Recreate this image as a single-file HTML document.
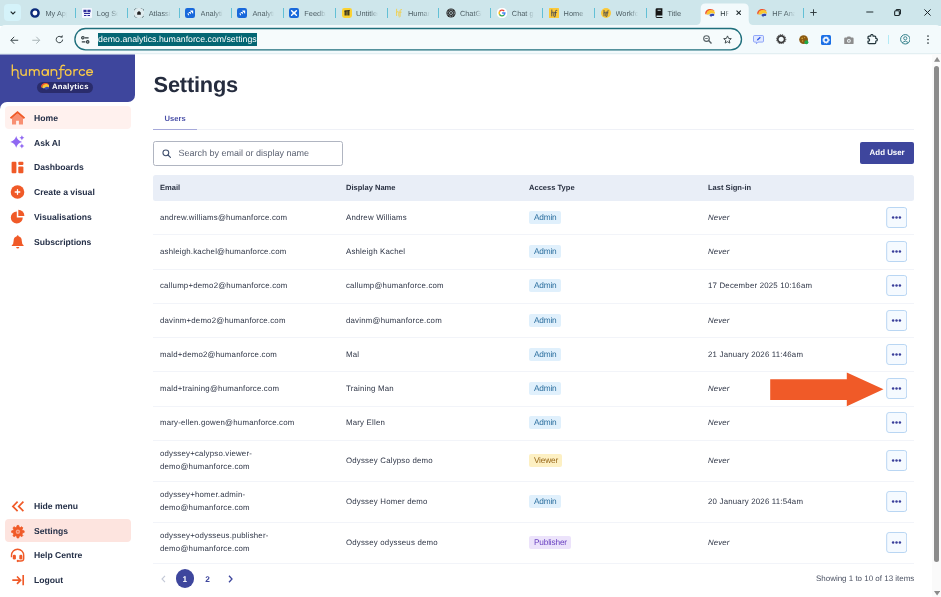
<!DOCTYPE html>
<html>
<head>
<meta charset="utf-8">
<title>Settings</title>
<style>
*{box-sizing:border-box;margin:0;padding:0}
html,body{width:941px;height:597px;overflow:hidden;background:#fff;font-family:"Liberation Sans",sans-serif;color:#2a3142}
div,span,svg,i{position:absolute}
#root{left:0;top:0;width:941px;height:597px;will-change:transform;overflow:hidden;text-rendering:geometricPrecision}
#tabstrip{left:0;top:0;width:941px;height:26px;background:#cee6eb}
#toolbar{left:0;top:25px;width:941px;height:28px;background:#f3fafc;border-radius:5px 5px 0 0}
#tbline{left:0;top:53px;width:941px;height:1px;background:#e3eff2}
.tt{top:8.8px;font-size:7.4px;line-height:9px;color:#4d5e64;white-space:nowrap;overflow:hidden;-webkit-mask-image:linear-gradient(90deg,#000 62%,transparent 100%);mask-image:linear-gradient(90deg,#000 62%,transparent 100%)}
.tsep{top:8px;width:1px;height:10px;background:#62c0d6}
.fav{top:7.5px;width:10px;height:10px}
#acttab{left:701px;top:4px;width:47px;height:22px;background:#f3fafc;border-radius:5px 5px 0 0}
#acttabL{left:696px;top:21px;width:5px;height:5px;background:radial-gradient(circle at 0 0,transparent 5px,#f3fafc 5.5px)}
#acttabR{left:748px;top:21px;width:5px;height:5px;background:radial-gradient(circle at 100% 0,transparent 5px,#f3fafc 5.5px)}
#tsearch{left:4px;top:4px;width:17px;height:17px;border-radius:4px;background:#d5f3fa}
#omni{left:74.4px;top:28px;width:668.4px;height:22.2px;border:1.7px solid #1b6b78;border-radius:11.1px;background:#f7fbfc}
#url{left:97.6px;top:33px;height:13px;background:#046673;color:#fff;font-size:8.76px;line-height:13.4px;white-space:nowrap;padding:0 0.5px}
#sidebar{left:0;top:54px;width:135px;height:543px;background:#fff}
#brand{left:0;top:0;width:135px;height:55px;background:#3e469d}
#brandcorner{left:135px;top:0;width:0;height:0}
#navpanel{left:0;top:48px;width:135px;height:495px;background:#fff;border-top-left-radius:7px}
#brandmask{left:128px;top:41px;width:7px;height:14px;background:#fff}
#brandround{left:121px;top:34px;width:14px;height:14px;background:#3e469d;border-bottom-right-radius:7px}
#pill{left:36.5px;top:27.8px;width:56.5px;height:10.8px;border-radius:6px;background:#2a2c6c}
#pill span{left:15.4px;top:0.3px;font-size:7.7px;letter-spacing:0.3px;line-height:10.4px;font-weight:bold;color:#fff}
.nav{left:5px;width:125.5px;height:22.5px;border-radius:4px}
.nav span{left:29px;top:6px;font-size:8.62px;line-height:11px;font-weight:bold;color:#253048;white-space:nowrap}
.nav svg{left:5.1px;top:4.25px;width:15px;height:15px;overflow:visible}
.nav.a1{background:#fff1ee}
.nav.a2{background:#fde4df}
#main{left:135px;top:54px;width:797px;height:543px;background:#fff}
h1{position:absolute;left:18.6px;top:17.6px;font-size:21.8px;line-height:26px;font-weight:bold;color:#252c3e;letter-spacing:-0.2px}
#tabUsers{left:29.5px;top:59.5px;font-size:7.6px;line-height:10px;font-weight:bold;color:#4a50a8}
#tabline{left:18px;top:75px;width:761px;height:1px;background:#eff1f7}
#tabul{left:18px;top:75px;width:44px;height:1px;background:#a6a9da}
#search{left:18px;top:87px;width:190px;height:25px;border:1px solid #b0b5c1;border-radius:2.5px}
#search span{left:24.5px;top:5.4px;font-size:9px;line-height:12px;color:#5c6373;white-space:nowrap}
#adduser{left:725px;top:87.6px;width:54.3px;height:22px;background:#3e469d;border-radius:2px;color:#fff;font-size:7.9px;font-weight:bold;text-align:center;line-height:22px}
#thead{left:18px;top:121.3px;width:761.3px;height:25.7px;background:#e9eef7;border-radius:2.5px}
#thead span{top:7.5px;font-size:7.55px;line-height:10px;font-weight:bold;color:#2a3142;white-space:nowrap}
.row{left:18px;width:761px;border-bottom:1px solid #f2f4f9}
.row span{font-size:7.85px;letter-spacing:0.2px;line-height:10px;color:#2e3546;white-space:nowrap}
.c1{left:7px}.c2{left:193px}.c3{left:376px}.c4{left:555px}
.row span.it{font-style:italic;font-size:7.8px;letter-spacing:0.12px}
.badge{left:376px;height:13px;border-radius:2px}
.badge span{left:4.9px;top:1.1px;font-size:8.3px;letter-spacing:-0.17px;line-height:10px}
.adm{background:#e0f0fc}.adm span{color:#2c6f9f}
.vw{background:#fdf0c3}.vw span{color:#9a6a1c}
.pub{background:#ece3fb}.pub span{color:#6a42c0}
.more{left:733px;width:21px;height:21px}
#pag span{font-size:8.3px;font-weight:bold;color:#3e469d;line-height:10px}
#showing{right:17.7px;top:520.3px;font-size:7.97px;line-height:10px;color:#4a5162;white-space:nowrap}
#scroll{left:932px;top:54px;width:9px;height:543px;background:#fafafa}
#thumb{left:2px;top:12px;width:5.2px;height:496px;border-radius:3px;background:#8b8b8b}
</style>
</head>
<body>
<div id="root">
<div id="tabstrip"></div>
<div id="toolbar"></div>
<div id="tbline"></div>
<svg class="fav" style="left:30.4px" viewBox="0 0 10 10"><circle cx="5" cy="5" r="3.6" fill="#fff" stroke="#0b2a7a" stroke-width="2.4"/></svg><div class="tt" style="left:45.4px;width:22px">My Apps</div><div class="tsep" style="left:75.3px"></div><svg class="fav" style="left:81.5px" viewBox="0 0 10 10"><rect x="0" y="0" width="10" height="10" rx="1" fill="#f4f7ff"/><path d="M2 2.2h2v1.6h-2zM6 2.2h2v1.6h-2zM2 5.5h6M2 7.5h2.5M5.5 7.5h2.5" stroke="#2a2a9a" stroke-width="1.1" fill="#2a2a9a"/></svg><div class="tt" style="left:96.8px;width:21px">Log Sea</div><div class="tsep" style="left:127.2px"></div><svg class="fav" style="left:134.0px" viewBox="0 0 10 10"><circle cx="5" cy="5" r="5.6" fill="#dfecef" stroke="#4f686e" stroke-width="0.9" stroke-dasharray="2.400 0.900"/><path d="M3.2 6.8V4.6L5 3l1.8 1.6v2.2z" fill="#222"/></svg><div class="tt" style="left:148.7px;width:22px">Atlassia</div><div class="tsep" style="left:179.0px"></div><svg class="fav" style="left:185.2px" viewBox="0 0 10 10"><rect x="0" y="0" width="10" height="10" rx="2.2" fill="#1868db"/><path d="M5.2 2.4h3v3c-.9 0-1.5-.6-1.5-1.5-.9 0-1.5-.6-1.5-1.5zM3.6 4h2.2v2.2c-.7 0-1.1-.5-1.1-1.1-.7 0-1.1-.5-1.1-1.1zM2.2 5.6h1.8v1.8c-.5 0-.9-.4-.9-.9-.5 0-.9-.4-.9-.9z" fill="#fff"/></svg><div class="tt" style="left:200.5px;width:22px">Analyti</div><div class="tsep" style="left:230.9px"></div><svg class="fav" style="left:237.1px" viewBox="0 0 10 10"><rect x="0" y="0" width="10" height="10" rx="2.2" fill="#1868db"/><path d="M5.2 2.4h3v3c-.9 0-1.5-.6-1.5-1.5-.9 0-1.5-.6-1.5-1.5zM3.6 4h2.2v2.2c-.7 0-1.1-.5-1.1-1.1-.7 0-1.1-.5-1.1-1.1zM2.2 5.6h1.8v1.8c-.5 0-.9-.4-.9-.9-.5 0-.9-.4-.9-.9z" fill="#fff"/></svg><div class="tt" style="left:252.4px;width:22px">Analyti</div><div class="tsep" style="left:282.8px"></div><svg class="fav" style="left:289.0px" viewBox="0 0 10 10"><rect x="0" y="0" width="10" height="10" rx="2.2" fill="#1868db"/><path d="M2.6 2.8l4.8 4.4M7.4 2.8l-4.8 4.4" stroke="#fff" stroke-width="1.5" stroke-linecap="round"/><rect x="3.8" y="3.9" width="2.4" height="2.2" fill="#fff"/></svg><div class="tt" style="left:304.3px;width:22px">Feedba</div><div class="tsep" style="left:334.6px"></div><svg class="fav" style="left:341.6px" viewBox="0 0 10 10"><rect x="0" y="0" width="10" height="10" rx="2.4" fill="#fbd232"/><path d="M2.6 2.6h1.2v4.8h-1.2zM4.4 2.6h1.2v4.8h-1.2zM6.2 2.6h1.2v4.8h-1.2z" fill="#1c1c1c"/><path d="M2.4 3.2l5.4-.8" stroke="#1c1c1c" stroke-width="0.8"/></svg><div class="tt" style="left:356.1px;width:22px">Untitled</div><div class="tsep" style="left:386.5px"></div><svg class="fav" style="left:393.5px" viewBox="0 0 10 10"><path d="M2.6 1.2v6.4M2.6 4.6c.3-1.4 2.2-1.4 2.2 0v3M7.6 1.6c-1.3-.3-1.5.5-1.5 1.4v5c0 1-.6 1.2-1.1 1M5.2 4.2h2" stroke="#f2cf4a" stroke-width="0.9" fill="none" stroke-linecap="round"/></svg><div class="tt" style="left:408.0px;width:22px">Human</div><div class="tsep" style="left:438.4px"></div><svg class="fav" style="left:446.0px" viewBox="0 0 10 10"><circle cx="5" cy="5" r="4.6" fill="#2b2b2b"/><circle cx="5" cy="5" r="3.3" fill="none" stroke="#cde4ea" stroke-width="0.7" stroke-dasharray="1.6 1"/><circle cx="5" cy="5" r="1.5" fill="none" stroke="#cde4ea" stroke-width="0.7"/></svg><div class="tt" style="left:459.9px;width:22px">ChatGP</div><div class="tsep" style="left:490.3px"></div><svg class="fav" style="left:497.3px" viewBox="0 0 10 10"><circle cx="5" cy="5" r="5.3" fill="#fff"/><g fill="none" stroke-width="1.35"><path d="M7.22 3.14A2.9 2.9 0 0 0 2.49 3.55" stroke="#ea4335"/><path d="M2.49 3.55A2.9 2.9 0 0 0 2.49 6.45" stroke="#fbbc05"/><path d="M2.49 6.45A2.9 2.9 0 0 0 7.05 7.05" stroke="#34a853"/><path d="M7.05 7.05A2.9 2.9 0 0 0 7.9 5H5.1" stroke="#4285f4"/></g></svg><div class="tt" style="left:511.8px;width:22px">Chat gp</div><div class="tsep" style="left:542.1px"></div><svg class="fav" style="left:549.4px" viewBox="0 0 10 10"><rect x="0" y="0" width="10" height="10" rx="0.6" fill="#fbc93a"/><path d="M2.8 2v6M2.8 5c.3-1.3 2-1.3 2 0v3M7.8 2.4c-1.2-.3-1.4.4-1.4 1.2v4.2c0 .9-.5 1-1 .9M5.6 4.6h1.8" stroke="#3a3f55" stroke-width="0.85" fill="none" stroke-linecap="round"/></svg><div class="tt" style="left:563.6px;width:22px">Home</div><div class="tsep" style="left:594.0px"></div><svg class="fav" style="left:601.2px" viewBox="0 0 10 10"><circle cx="5" cy="5" r="5" fill="#fbc93a"/><path d="M3 2.4v5.4M3 5c.3-1.2 1.8-1.2 1.8 0v2.8M7.4 2.8c-1.1-.3-1.3.4-1.3 1.1v3.8c0 .8-.4.9-.9.8M5.4 4.8h1.6" stroke="#3a3f55" stroke-width="0.8" fill="none" stroke-linecap="round"/></svg><div class="tt" style="left:615.5px;width:22px">Workfo</div><div class="tsep" style="left:645.9px"></div><svg class="fav" style="left:654.1px" viewBox="0 0 10 10"><path d="M1.6 1.6Q1.6 .2 3 .2H8.4V7.6H3Q2.4 7.6 2.4 8.3Q2.4 9 3 9H8.4V9.9H3Q1.6 9.9 1.6 8.5Z" fill="#151515"/><rect x="3.6" y="1.8" width="3.2" height="0.9" fill="#cde4ea"/></svg><div class="tt" style="left:667.4px;width:22px">Title</div><svg style="left:694px;top:0;width:62px;height:26px" viewBox="694 0 62 26"><path d="M695.5 25.2Q700.7 25.200 700.700 20V8.300Q700.700 3.500 705.500 3.500H743.900Q748.700 3.500 748.700 8.300V20Q748.700 25.200 753.900 25.200V26H695.500Z" fill="#f3fafc"/></svg><svg class="fav" style="left:705px" viewBox="0 0 10 10"><path d="M0.2 5.6C0 2.9 2.4 .9 5.2 .9C7.2 .9 8.9 1.7 9.6 3.1C7.8 2.1 4.4 2 2.5 3.7C1.7 4.5 1.5 5.4 1.7 6.4C.9 6.4 .3 6.2 .2 5.6Z" fill="#f0542c"/><path d="M1.7 6.4C1.3 4 3.3 2.1 5.8 2.1C7.8 2.1 9.4 2.9 9.9 4.4C10.1 5.200 9.800 5.800 9.200 6C7.800 5 5.900 5.200 4.900 6C3.900 6.800 2.900 6.800 1.700 6.400Z" fill="#fbc630"/><path d="M2.6 6.9C3.6 7 4.300 6.600 4.900 6.200C5.900 5.400 7.800 5.300 9.100 6.100" fill="none" stroke="#b9d4f2" stroke-width="0.500"/><path d="M4.900 6.500C5.900 5.600 7.800 5.400 9.200 6.200C9.600 7 9 7.900 7.800 8.100C7.100 8.200 6.700 8.100 6.500 8.300L6.100 9.300L5.300 8.100C4.500 7.900 4.300 7.100 4.900 6.500Z" fill="#3447b0"/></svg><div class="tt" style="left:720.3px;width:9px;color:#2c383c">HF A</div><svg style="left:735.8px;top:9.9px;width:5.4px;height:5.4px" viewBox="0 0 6 6"><path d="M.6.6l4.800 4.800M5.400.6L.6 5.400" stroke="#1f2a2e" stroke-width="1.200"/></svg><svg class="fav" style="left:757px" viewBox="0 0 10 10"><path d="M0.2 5.6C0 2.9 2.4 .9 5.2 .9C7.2 .9 8.9 1.7 9.6 3.1C7.8 2.1 4.4 2 2.5 3.7C1.7 4.5 1.5 5.4 1.7 6.4C.9 6.4 .3 6.2 .2 5.6Z" fill="#f0542c"/><path d="M1.7 6.4C1.3 4 3.3 2.1 5.8 2.1C7.8 2.1 9.4 2.9 9.9 4.4C10.1 5.200 9.800 5.800 9.200 6C7.800 5 5.900 5.200 4.900 6C3.900 6.800 2.900 6.800 1.700 6.400Z" fill="#fbc630"/><path d="M2.6 6.9C3.6 7 4.300 6.600 4.900 6.200C5.900 5.400 7.800 5.300 9.100 6.100" fill="none" stroke="#b9d4f2" stroke-width="0.500"/><path d="M4.900 6.500C5.900 5.600 7.800 5.400 9.200 6.200C9.600 7 9 7.900 7.800 8.100C7.100 8.200 6.700 8.100 6.500 8.300L6.100 9.300L5.300 8.100C4.500 7.900 4.300 7.100 4.900 6.500Z" fill="#3447b0"/></svg><div class="tt" style="left:772.3px;width:23px">HF Ana</div><div class="tsep" style="left:802.5px"></div><svg style="left:810px;top:9.3px;width:7px;height:7px" viewBox="0 0 7 7"><path d="M3.5 .3v6.4M.3 3.5h6.4" stroke="#2c383c" stroke-width="0.95"/></svg><svg style="left:866px;top:8px;width:8px;height:8px" viewBox="0 0 8 8"><path d="M.3 4h7" stroke="#1f2a2e" stroke-width="1"/></svg><svg style="left:894.3px;top:8.6px;width:7.2px;height:7.2px" viewBox="0 0 8 8"><rect x=".7" y="2" width="5.300" height="5.300" rx="1.300" fill="none" stroke="#1f2a2e" stroke-width="1.250"/><path d="M2.300 1.800Q2.400.7 3.500.7H6.100Q7.300.7 7.300 1.900V4.500Q7.300 5.600 6.200 5.700" fill="none" stroke="#1f2a2e" stroke-width="1.250"/></svg><svg style="left:924px;top:8.8px;width:7px;height:7px" viewBox="0 0 7 7"><path d="M.4.4l6.2 6.2M6.6.4L.4 6.6" stroke="#1f2a2e" stroke-width="1"/></svg><div id="tsearch"><svg style="left:5.5px;top:6.5px;width:6px;height:4px" viewBox="0 0 6 4"><path d="M.7.7L3 3l2.3-2.3" fill="none" stroke="#1f2a2e" stroke-width="1.2"/></svg></div>
<svg style="left:10px;top:35.5px;width:8.5px;height:8.5px" viewBox="0 0 8.5 8.5"><path d="M8.2 4.25H.9M4.2.8L.8 4.25 4.2 7.7" fill="none" stroke="#3a4549" stroke-width="1"/></svg><svg style="left:32px;top:35.5px;width:8.5px;height:8.5px" viewBox="0 0 8.5 8.5"><path d="M.3 4.25h7.3M4.3.8l3.4 3.45L4.3 7.7" fill="none" stroke="#a9b4b7" stroke-width="1"/></svg><svg style="left:54.5px;top:35px;width:9px;height:9px" viewBox="0 0 9 9"><path d="M7.6 4.6A3.2 3.2 0 1 1 6.6 2.2" fill="none" stroke="#3a4549" stroke-width="1"/><path d="M5 2.6h2.6V0z" fill="#3a4549"/></svg><svg style="left:73px;top:27px;width:671px;height:25px" viewBox="0 0 671 25"><rect x="1.9" y="1.5" width="666.6" height="21.3" rx="10.65" fill="#f6fbfc" stroke="#1f6f7c" stroke-width="1.35"/></svg><svg style="left:81.3px;top:35.8px;width:9px;height:8px" viewBox="0 0 9 8"><path d="M4 1.8H7.6M.8 5.9H4.4" stroke="#2f3a3e" stroke-width="1.15"/><circle cx="1.9" cy="1.8" r="1.25" fill="#c9d3d6" stroke="#2f3a3e" stroke-width="1.1"/><circle cx="6.700" cy="5.900" r="1.250" fill="#c9d3d6" stroke="#2f3a3e" stroke-width="1.100"/></svg><div id="url">demo.analytics.humanforce.com/settings</div><svg style="left:703px;top:35.2px;width:9px;height:9px" viewBox="0 0 9 9"><circle cx="3.5" cy="3.5" r="2.800" fill="none" stroke="#566165" stroke-width="1.150"/><path d="M5.600 5.600L8.500 8.500" stroke="#566165" stroke-width="1.400"/><path d="M2.200 3.500h2.600" stroke="#566165" stroke-width="0.900"/></svg><svg style="left:723px;top:34.7px;width:9px;height:9px" viewBox="0 0 9 9"><path d="M4.5.9l1.1 2.5 2.7.25-2.05 1.8.6 2.65L4.5 6.7 2.15 8.1l.6-2.65L.7 3.65l2.7-.25z" fill="none" stroke="#333d41" stroke-width="0.9" stroke-linejoin="round"/></svg><svg style="left:753.3px;top:35px;width:11px;height:9.5px" viewBox="0 0 11 9.5"><path d="M1.6.5H9.4Q10.5.5 10.5 1.6V6Q10.5 7.1 9.4 7.1H5L3.4 8.8V7.1H1.6Q.5 7.1.5 6V1.6Q.5.5 1.6.5Z" fill="#dfe8ff" stroke="#6b86f5" stroke-width="0.7"/><path d="M3.8 5.6L4.2 4.3 6.9 1.8 7.8 2.7 5.1 5.2Z" fill="#2f55e6"/></svg><svg style="left:776.2px;top:34px;width:10.4px;height:10.4px" viewBox="0 0 10.4 10.4"><circle cx="5.2" cy="5.2" r="3.4" fill="none" stroke="#3a3a3a" stroke-width="1.7"/><circle cx="5.2" cy="5.2" r="4.6" fill="none" stroke="#3a3a3a" stroke-width="1" stroke-dasharray="1.1 0.9"/></svg><svg style="left:799px;top:34.5px;width:10px;height:10px" viewBox="0 0 10 10"><circle cx="4.6" cy="4.6" r="4.4" fill="#8a5a12"/><circle cx="3.2" cy="3.4" r="0.8" fill="#d9a53a"/><circle cx="5.6" cy="2.6" r="0.6" fill="#d9a53a"/><circle cx="3.6" cy="6" r="0.7" fill="#d9a53a"/><circle cx="7.4" cy="7.2" r="2" fill="#1fa84a"/></svg><svg style="left:821.3px;top:34.5px;width:10px;height:10px" viewBox="0 0 10 10"><rect width="10" height="10" rx="1.6" fill="#1a6fe6"/><circle cx="5" cy="5" r="2.2" fill="none" stroke="#fff" stroke-width="1.4"/><circle cx="5" cy="5" r="3.2" fill="none" stroke="#fff" stroke-width="1" stroke-dasharray="1 1.05"/></svg><svg style="left:844.2px;top:35.6px;width:9.8px;height:8.4px" viewBox="0 0 9.8 8.4"><path d="M1.2 1.6H2.8L3.6.4H6.2L7 1.6H8.6Q9.6 1.6 9.6 2.6V7.2Q9.6 8.2 8.6 8.2H1.2Q.2 8.2.2 7.2V2.6Q.2 1.6 1.2 1.6Z" fill="#8d8d8d"/><circle cx="4.9" cy="4.8" r="1.9" fill="#f3fafc"/><circle cx="4.9" cy="4.8" r="0.9" fill="#8d8d8d"/></svg><svg style="left:866.6px;top:34.2px;width:11px;height:10.4px" viewBox="0 0 11 10.4"><path d="M2 2.2H3.700C3.700 1.300 3.900 .5 4.900 .5C5.900 .5 6.100 1.300 6.100 2.200H7.800Q8.800 2.200 8.800 3.200V4.400C9.600 4.400 10.400 4.600 10.400 5.700C10.400 6.800 9.600 7 8.800 7V8.600Q8.800 9.600 7.800 9.600H2Q1 9.600 1 8.600V7.200C1.800 7.200 2.600 6.900 2.600 5.900C2.600 4.900 1.800 4.600 1 4.600V3.200Q1 2.200 2 2.200Z" fill="none" stroke="#22343a" stroke-width="1.2" stroke-linejoin="round"/></svg><div style="left:887.6px;top:34.5px;width:1.4px;height:9.8px;background:#b2eaf5"></div><svg style="left:899.8px;top:34.2px;width:10.6px;height:10.6px" viewBox="0 0 10.6 10.6"><circle cx="5.3" cy="5.3" r="4.7" fill="none" stroke="#2f7d88" stroke-width="1"/><circle cx="5.3" cy="4.3" r="1.6" fill="none" stroke="#2f7d88" stroke-width="0.9"/><path d="M2.2 8.6Q5.3 5.6 8.4 8.6" fill="none" stroke="#2f7d88" stroke-width="0.9"/></svg><svg style="left:926.6px;top:35.2px;width:2px;height:9px" viewBox="0 0 2 9"><circle cx="1" cy="1" r=".85" fill="#2b363a"/><circle cx="1" cy="4.5" r=".85" fill="#2b363a"/><circle cx="1" cy="8" r=".85" fill="#2b363a"/></svg>
<div id="sidebar"><div id="brand"></div><div id="navpanel"></div><div id="brandmask"></div><div id="brandround"></div><svg id="hf" viewBox="0 0 941 376" style="left:8px;top:6px;width:90px;height:35.96px"><g fill="none" stroke="#f8c948" stroke-width="13.6" stroke-linecap="round" stroke-linejoin="round"><path d="M45 50V160M45 126C45 108 58 100 75 100C92 100 104 108 104 126V176C104 186 108 192 116 190"/><path d="M135 100V134C135 152 147 160 162 160C178 160 190 152 190 134M190 100V160"/><path d="M225 160V100M225 126C225 108 235 100 250 100C265 100 275 108 275 126V160M275 126C275 108 285 100 300 100C315 100 325 108 325 126V160"/><circle cx="386" cy="130" r="30"/><path d="M421 100V160"/><path d="M452 160V100M452 126C452 108 464 100 480 100C497 100 509 108 509 126V160"/><path d="M592 58C570 50 553 60 553 84V170C553 190 540 198 520 191M537 101H588"/><circle cx="629" cy="130" r="30"/><path d="M690 160V100M690 128C690 108 705 98 728 101"/><path d="M799 111A30 30 0 1 0 799 149"/><path d="M824 130H883C883 112 870 100 853 100C836 100 823 113 823 130C823 147 836 160 853 160C864 160 873 155 878 148"/></g></svg><div id="pill"><svg style="left:4px;top:1.7px;width:8.600px;height:7.400px" viewBox="0.4 1 9.4 8.4"><path d="M0.2 5.6C0 2.9 2.4 .9 5.2 .9C7.2 .9 8.9 1.7 9.6 3.1C7.8 2.1 4.4 2 2.5 3.7C1.7 4.5 1.5 5.4 1.7 6.4C.9 6.4 .3 6.2 .2 5.6Z" fill="#f0542c"/><path d="M1.7 6.4C1.3 4 3.3 2.1 5.8 2.1C7.8 2.1 9.4 2.9 9.9 4.4C10.1 5.200 9.800 5.800 9.200 6C7.800 5 5.900 5.200 4.900 6C3.900 6.800 2.900 6.800 1.700 6.400Z" fill="#fbc630"/><path d="M2.6 6.9C3.6 7 4.300 6.600 4.900 6.200C5.900 5.400 7.800 5.300 9.100 6.100" fill="none" stroke="#b9d4f2" stroke-width="0.500"/><path d="M4.900 6.500C5.900 5.600 7.800 5.400 9.200 6.200C9.600 7 9 7.900 7.800 8.100C7.100 8.200 6.700 8.100 6.500 8.300L6.100 9.300L5.300 8.100C4.500 7.900 4.300 7.100 4.900 6.500Z" fill="#3447b0"/></svg><span>Analytics</span></div><div class="nav a1" style="top:52.35px"><svg viewBox="0 0 15 15" style="top:4.25px"><path d="M2 7V13.4H6.1V9.8H8.9V13.4H13V7L7.5 2.6Z" fill="#f88f72"/><path d="M0.5 7.3L7.5 1.3 14.5 7.3" fill="none" stroke="#f05a28" stroke-width="1.8" stroke-linejoin="miter"/></svg><span style="top:7px">Home</span></div><div class="nav " style="top:77.15px"><svg viewBox="0 0 15 15" style="top:4.25px"><path d="M6.2 1.0Q7.35 5.75 12.100000000000001 6.9Q7.35 8.05 6.2 12.8Q5.050000000000001 8.05 0.2999999999999998 6.9Q5.050000000000001 5.75 6.2 1.0Z" fill="#9068f2"/><path d="M11.9 0.20000000000000018Q12.35 2.25 14.4 2.7Q12.35 3.1500000000000004 11.9 5.2Q11.450000000000001 3.1500000000000004 9.4 2.7Q11.450000000000001 2.25 11.9 0.20000000000000018Z" fill="#9068f2"/><path d="M11.9 8.4Q12.35 10.450000000000001 14.4 10.9Q12.35 11.35 11.9 13.4Q11.450000000000001 11.35 9.4 10.9Q11.450000000000001 10.450000000000001 11.9 8.4Z" fill="#9068f2"/></svg><span style="top:6.6px">Ask AI</span></div><div class="nav " style="top:101.95px"><svg viewBox="0 0 15 15" style="top:4.25px"><rect x="1.6" y="1.8" width="4.8" height="11.5" rx="1" fill="#f05a28"/><rect x="8.3" y="1.8" width="5.1" height="3.2" rx="0.9" fill="#f05a28"/><rect x="8.3" y="6.500" width="5.100" height="6.800" rx="1" fill="#f05a28"/></svg><span style="top:6px">Dashboards</span></div><div class="nav " style="top:126.75px"><svg viewBox="0 0 15 15" style="top:4.25px"><circle cx="7.5" cy="7.0" r="6.8" fill="#f05a28"/><path d="M7.5 4.700v4.600M5.200 7.000h4.600" stroke="#fff" stroke-width="1.300" stroke-linecap="round"/></svg><span style="top:6px">Create a visual</span></div><div class="nav " style="top:151.55px"><svg viewBox="0 0 15 15" style="top:4.25px"><path d="M6.8 1.6A6 6 0 1 0 12.8 7.6H6.8Z" fill="#f05a28"/><path d="M8.3 -0.2A6.100 6.100 0 0 1 14.400 5.900H8.300Z" fill="#f05a28"/></svg><span style="top:6px">Visualisations</span></div><div class="nav " style="top:176.25px"><svg viewBox="0 0 15 15" style="top:4.65px"><path d="M7.700 0.300Q8.500 0.300 8.600 1.200Q11.800 2.100 11.800 5.900Q11.800 8.900 13.600 10.300V11.100H1.800V10.300Q3.600 8.900 3.600 5.900Q3.600 2.100 6.800 1.200Q6.900 0.300 7.700 0.300Z" fill="#f05a28"/><path d="M6.100 12.100H9.300Q9.000 13.600 7.700 13.600Q6.400 13.600 6.100 12.100Z" fill="#f05a28"/></svg><span style="top:6.8px">Subscriptions</span></div><div class="nav " style="top:440.35px"><svg viewBox="0 0 15 15" style="top:4.25px"><path d="M7.6 2.7L2.9 7.4 7.6 12.1M13.4 2.7L8.7 7.4 13.4 12.1" fill="none" stroke="#f05a28" stroke-width="1.7"/></svg><span style="top:6.6px">Hide menu</span></div><div class="nav a2" style="top:465.25px"><svg viewBox="0 0 15 15" style="top:4.25px"><path d="M6.78 3.03 L7.06 1.46 L8.74 1.46 L9.02 3.03 L10.41 3.61 L11.72 2.69 L12.91 3.88 L11.99 5.19 L12.57 6.58 L14.14 6.86 L14.14 8.54 L12.57 8.82 L11.99 10.21 L12.91 11.52 L11.72 12.71 L10.41 11.79 L9.02 12.37 L8.74 13.94 L7.06 13.94 L6.78 12.37 L5.39 11.79 L4.08 12.71 L2.89 11.52 L3.81 10.21 L3.23 8.82 L1.66 8.54 L1.66 6.86 L3.23 6.58 L3.81 5.19 L2.89 3.88 L4.08 2.69 L5.39 3.61Z" fill="#f05a28" stroke="#f05a28" stroke-width="0.8" stroke-linejoin="round"/><circle cx="7.9" cy="7.7" r="2.2" fill="#f9a58c"/><circle cx="7.9" cy="7.7" r="0.8" fill="#f05a28"/></svg><span style="top:6.6px">Settings</span></div><div class="nav " style="top:489.95px"><svg viewBox="0 0 15 15" style="top:4.25px"><path d="M1.500 9.200V7.300A6.100 6.100 0 0 1 13.700 7.300V10.400Q13.700 13 10.800 13H8.400" fill="none" stroke="#f05a28" stroke-width="1.400"/><rect x="2.800" y="6.800" width="3.100" height="4.800" rx="1.300" fill="#f05a28"/><rect x="9.300" y="6.800" width="3.100" height="4.800" rx="1.300" fill="#f05a28"/><circle cx="7.800" cy="13" r="1.150" fill="#f05a28"/></svg><span style="top:6px">Help Centre</span></div><div class="nav " style="top:514.55px"><svg viewBox="0 0 15 15" style="top:4.25px"><path d="M2.3 7.15H10.4M7 3.5L10.600 7.150 7 10.800M13.200 2.100V12.200" fill="none" stroke="#f05a28" stroke-width="1.650"/></svg><span style="top:6px">Logout</span></div></div>
<div id="main"><h1>Settings</h1><div id="tabUsers">Users</div><div id="tabline"></div><div id="tabul"></div><div id="search"><svg style="left:7.6px;top:6.6px;width:9.4px;height:9.4px" viewBox="0 0 10 10"><circle cx="4.1" cy="4.1" r="3.1" fill="none" stroke="#41506e" stroke-width="1.15"/><path d="M6.4 6.4L9 9" stroke="#41506e" stroke-width="1.2" stroke-linecap="round"/></svg><span>Search by email or display name</span></div><div id="adduser">Add User</div><div id="thead"><span class="c1">Email</span><span class="c2">Display Name</span><span class="c3">Access Type</span><span class="c4">Last Sign-in</span></div><div class="row" style="top:146.50px;height:34.50px"><span class="c1" style="top:12.75px">andrew.williams@humanforce.com</span><span class="c2" style="top:12.75px">Andrew Williams</span><div class="badge adm" style="top:10.50px;width:32px"><span>Admin</span></div><span class="c4 it" style="top:12.75px">Never</span><svg class="more" style="top:6.50px" viewBox="0 0 21 21"><rect x=".7" y=".5" width="20" height="20" rx="2.5" fill="#f5faff" stroke="#b9d6f3"/><circle cx="7.1" cy="10.5" r="1.25" fill="#3a3f9a"/><circle cx="10.5" cy="10.5" r="1.25" fill="#3a3f9a"/><circle cx="13.9" cy="10.5" r="1.25" fill="#3a3f9a"/></svg></div><div class="row" style="top:181.00px;height:35.00px"><span class="c1" style="top:12.00px">ashleigh.kachel@humanforce.com</span><span class="c2" style="top:12.00px">Ashleigh Kachel</span><div class="badge adm" style="top:10.00px;width:32px"><span>Admin</span></div><span class="c4 it" style="top:12.00px">Never</span><svg class="more" style="top:6.00px" viewBox="0 0 21 21"><rect x=".7" y=".5" width="20" height="20" rx="2.5" fill="#f5faff" stroke="#b9d6f3"/><circle cx="7.1" cy="10.5" r="1.25" fill="#3a3f9a"/><circle cx="10.5" cy="10.5" r="1.25" fill="#3a3f9a"/><circle cx="13.9" cy="10.5" r="1.25" fill="#3a3f9a"/></svg></div><div class="row" style="top:216.00px;height:34.00px"><span class="c1" style="top:10.50px">callump+demo2@humanforce.com</span><span class="c2" style="top:10.50px">callump@humanforce.com</span><div class="badge adm" style="top:9.00px;width:32px"><span>Admin</span></div><span class="c4" style="top:10.50px">17 December 2025 10:16am</span><svg class="more" style="top:5.00px" viewBox="0 0 21 21"><rect x=".7" y=".5" width="20" height="20" rx="2.5" fill="#f5faff" stroke="#b9d6f3"/><circle cx="7.1" cy="10.5" r="1.25" fill="#3a3f9a"/><circle cx="10.5" cy="10.5" r="1.25" fill="#3a3f9a"/><circle cx="13.9" cy="10.5" r="1.25" fill="#3a3f9a"/></svg></div><div class="row" style="top:250.00px;height:34.00px"><span class="c1" style="top:11.50px">davinm+demo2@humanforce.com</span><span class="c2" style="top:11.50px">davinm@humanforce.com</span><div class="badge adm" style="top:10.00px;width:32px"><span>Admin</span></div><span class="c4 it" style="top:11.50px">Never</span><svg class="more" style="top:6.00px" viewBox="0 0 21 21"><rect x=".7" y=".5" width="20" height="20" rx="2.5" fill="#f5faff" stroke="#b9d6f3"/><circle cx="7.1" cy="10.5" r="1.25" fill="#3a3f9a"/><circle cx="10.5" cy="10.5" r="1.25" fill="#3a3f9a"/><circle cx="13.9" cy="10.5" r="1.25" fill="#3a3f9a"/></svg></div><div class="row" style="top:284.00px;height:34.00px"><span class="c1" style="top:11.50px">mald+demo2@humanforce.com</span><span class="c2" style="top:11.50px">Mal</span><div class="badge adm" style="top:10.00px;width:32px"><span>Admin</span></div><span class="c4" style="top:11.50px">21 January 2026 11:46am</span><svg class="more" style="top:6.00px" viewBox="0 0 21 21"><rect x=".7" y=".5" width="20" height="20" rx="2.5" fill="#f5faff" stroke="#b9d6f3"/><circle cx="7.1" cy="10.5" r="1.25" fill="#3a3f9a"/><circle cx="10.5" cy="10.5" r="1.25" fill="#3a3f9a"/><circle cx="13.9" cy="10.5" r="1.25" fill="#3a3f9a"/></svg></div><div class="row" style="top:318.00px;height:34.50px"><span class="c1" style="top:11.75px">mald+training@humanforce.com</span><span class="c2" style="top:11.75px">Training Man</span><div class="badge adm" style="top:10.00px;width:32px"><span>Admin</span></div><span class="c4 it" style="top:11.75px">Never</span><svg class="more" style="top:6.00px" viewBox="0 0 21 21"><rect x=".7" y=".5" width="20" height="20" rx="2.5" fill="#f5faff" stroke="#b9d6f3"/><circle cx="7.1" cy="10.5" r="1.25" fill="#3a3f9a"/><circle cx="10.5" cy="10.5" r="1.25" fill="#3a3f9a"/><circle cx="13.9" cy="10.5" r="1.25" fill="#3a3f9a"/></svg></div><div class="row" style="top:352.50px;height:34.50px"><span class="c1" style="top:11.75px">mary-ellen.gowen@humanforce.com</span><span class="c2" style="top:11.75px">Mary Ellen</span><div class="badge adm" style="top:9.50px;width:32px"><span>Admin</span></div><span class="c4 it" style="top:11.75px">Never</span><svg class="more" style="top:5.50px" viewBox="0 0 21 21"><rect x=".7" y=".5" width="20" height="20" rx="2.5" fill="#f5faff" stroke="#b9d6f3"/><circle cx="7.1" cy="10.5" r="1.25" fill="#3a3f9a"/><circle cx="10.5" cy="10.5" r="1.25" fill="#3a3f9a"/><circle cx="13.9" cy="10.5" r="1.25" fill="#3a3f9a"/></svg></div><div class="row" style="top:387.00px;height:40.50px"><span class="c1" style="top:8.10px">odyssey+calypso.viewer-</span><span class="c1" style="top:21.40px">demo@humanforce.com</span><span class="c2" style="top:14.75px">Odyssey Calypso demo</span><div class="badge vw" style="top:13.00px;width:32.8px"><span>Viewer</span></div><span class="c4 it" style="top:14.75px">Never</span><svg class="more" style="top:9.00px" viewBox="0 0 21 21"><rect x=".7" y=".5" width="20" height="20" rx="2.5" fill="#f5faff" stroke="#b9d6f3"/><circle cx="7.1" cy="10.5" r="1.25" fill="#3a3f9a"/><circle cx="10.5" cy="10.5" r="1.25" fill="#3a3f9a"/><circle cx="13.9" cy="10.5" r="1.25" fill="#3a3f9a"/></svg></div><div class="row" style="top:427.50px;height:41.00px"><span class="c1" style="top:8.35px">odyssey+homer.admin-</span><span class="c1" style="top:21.65px">demo@humanforce.com</span><span class="c2" style="top:15.00px">Odyssey Homer demo</span><div class="badge adm" style="top:13.50px;width:32px"><span>Admin</span></div><span class="c4" style="top:15.00px">20 January 2026 11:54am</span><svg class="more" style="top:9.50px" viewBox="0 0 21 21"><rect x=".7" y=".5" width="20" height="20" rx="2.5" fill="#f5faff" stroke="#b9d6f3"/><circle cx="7.1" cy="10.5" r="1.25" fill="#3a3f9a"/><circle cx="10.5" cy="10.5" r="1.25" fill="#3a3f9a"/><circle cx="13.9" cy="10.5" r="1.25" fill="#3a3f9a"/></svg></div><div class="row" style="top:468.50px;height:41.00px"><span class="c1" style="top:8.35px">odyssey+odysseus.publisher-</span><span class="c1" style="top:21.65px">demo@humanforce.com</span><span class="c2" style="top:15.00px">Odyssey odysseus demo</span><div class="badge pub" style="top:13.50px;width:41.6px"><span>Publisher</span></div><span class="c4 it" style="top:15.00px">Never</span><svg class="more" style="top:9.50px" viewBox="0 0 21 21"><rect x=".7" y=".5" width="20" height="20" rx="2.5" fill="#f5faff" stroke="#b9d6f3"/><circle cx="7.1" cy="10.5" r="1.25" fill="#3a3f9a"/><circle cx="10.5" cy="10.5" r="1.25" fill="#3a3f9a"/><circle cx="13.9" cy="10.5" r="1.25" fill="#3a3f9a"/></svg></div><svg style="left:635px;top:318px;width:114px;height:35px" viewBox="770 372 114 35"><path d="M770.2 379.300H846.800V372.400L883.500 389.200 846.800 406.300V400H770.200Z" fill="#f05a28"/></svg><div id="pag"><svg style="left:25.5px;top:520.5px;width:5px;height:8px" viewBox="0 0 5 8"><path d="M4 .8L1 4l3 3.200" fill="none" stroke="#c3c8d6" stroke-width="1.100"/></svg><div style="left:40.5px;top:515.2px;width:18.600px;height:18.600px;border-radius:50%;background:#3e469d"></div><span style="left:47.5px;top:519.6px;color:#fff">1</span><span style="left:70.30000000000001px;top:519.6px">2</span><svg style="left:92.80000000000001px;top:520.5px;width:5px;height:8px" viewBox="0 0 5 8"><path d="M1 .8l3 3.200-3 3.200" fill="none" stroke="#3e469d" stroke-width="1.300"/></svg></div><div id="showing">Showing 1 to 10 of 13 items</div></div>
<div style="left:0;top:54px;width:135px;height:1px;background:#9aa1cd"></div><div style="left:135px;top:54px;width:806px;height:1px;background:#f8fbfc"></div>
<div id="scroll"><div id="thumb"></div><svg style="left:1.600px;top:3.200px;width:6.200px;height:4.800px" viewBox="0 0 6.200 4.800"><path d="M3.100 0L6.200 4.800H0Z" fill="#8b8b8b"/></svg><svg style="left:1.600px;top:537.200px;width:6.200px;height:4.600px" viewBox="0 0 6.200 4.600"><path d="M0 0H6.200L3.100 4.600Z" fill="#8b8b8b"/></svg></div>
</div>
</body>
</html>
